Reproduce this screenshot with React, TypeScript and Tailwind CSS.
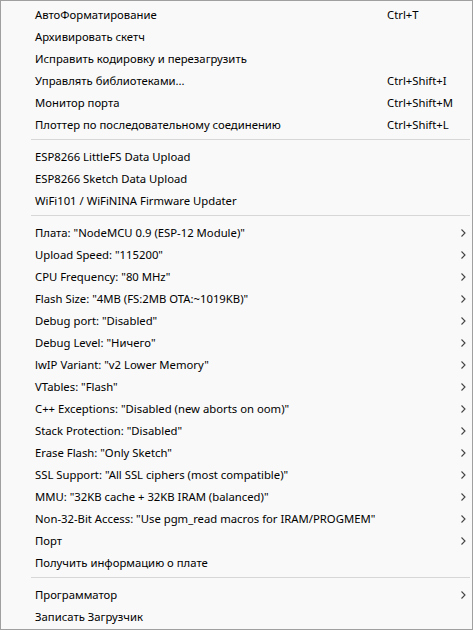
import React from 'react';

type Item = { label: string; shortcut?: string; sub?: boolean };

const groups: Item[][] = [
  [
    { label: 'АвтоФорматирование', shortcut: 'Ctrl+T' },
    { label: 'Архивировать скетч' },
    { label: 'Исправить кодировку и перезагрузить' },
    { label: 'Управлять библиотеками...', shortcut: 'Ctrl+Shift+I' },
    { label: 'Монитор порта', shortcut: 'Ctrl+Shift+M' },
    { label: 'Плоттер по последовательному соединению', shortcut: 'Ctrl+Shift+L' },
  ],
  [
    { label: 'ESP8266 LittleFS Data Upload' },
    { label: 'ESP8266 Sketch Data Upload' },
    { label: 'WiFi101 / WiFiNINA Firmware Updater' },
  ],
  [
    { label: 'Плата: "NodeMCU 0.9 (ESP-12 Module)"', sub: true },
    { label: 'Upload Speed: "115200"', sub: true },
    { label: 'CPU Frequency: "80 MHz"', sub: true },
    { label: 'Flash Size: "4MB (FS:2MB OTA:~1019KB)"', sub: true },
    { label: 'Debug port: "Disabled"', sub: true },
    { label: 'Debug Level: "Ничего"', sub: true },
    { label: 'lwIP Variant: "v2 Lower Memory"', sub: true },
    { label: 'VTables: "Flash"', sub: true },
    { label: 'C++ Exceptions: "Disabled (new aborts on oom)"', sub: true },
    { label: 'Stack Protection: "Disabled"', sub: true },
    { label: 'Erase Flash: "Only Sketch"', sub: true },
    { label: 'SSL Support: "All SSL ciphers (most compatible)"', sub: true },
    { label: 'MMU: "32KB cache + 32KB IRAM (balanced)"', sub: true },
    { label: 'Non-32-Bit Access: "Use pgm_read macros for IRAM/PROGMEM"', sub: true },
    { label: 'Порт', sub: true },
    { label: 'Получить информацию о плате' },
  ],
  [
    { label: 'Программатор', sub: true },
    { label: 'Записать Загрузчик' },
  ],
];

const Chevron = () => (
  <svg width="5" height="8" viewBox="0 0 5 8" className="text-[#444]">
    <path d="M0.5 0.5 L4 4 L0.5 7.5" fill="none" stroke="currentColor" strokeWidth="1.1" />
  </svg>
);

const Row = ({ item }: { item: Item }) => (
  <div className="flex items-center h-[22px] pl-[34px] pr-[6px] text-[11.3px] text-black">
    <span className="flex-1 whitespace-nowrap">{item.label}</span>
    {item.shortcut && <span className="w-[79px] whitespace-nowrap">{item.shortcut}</span>}
    {item.sub && <Chevron />}
  </div>
);

export default function App() {
  return (
    <div
      className="w-[473px] h-[630px] bg-[#f9f9f9] border border-[#a0a0a0] pt-[3px] overflow-hidden"
      style={{ fontFamily: '"Noto Sans", "Open Sans", sans-serif' }}
    >
      {groups.map((g, i) => (
        <div key={i}>
          {i > 0 && (
            <div className="h-[10px] pt-[3px] pl-[30px] pr-[2px]">
              <div className="h-px bg-[#d7d7d7]" />
            </div>
          )}
          {g.map((item) => (
            <Row key={item.label} item={item} />
          ))}
        </div>
      ))}
    </div>
  );
}
